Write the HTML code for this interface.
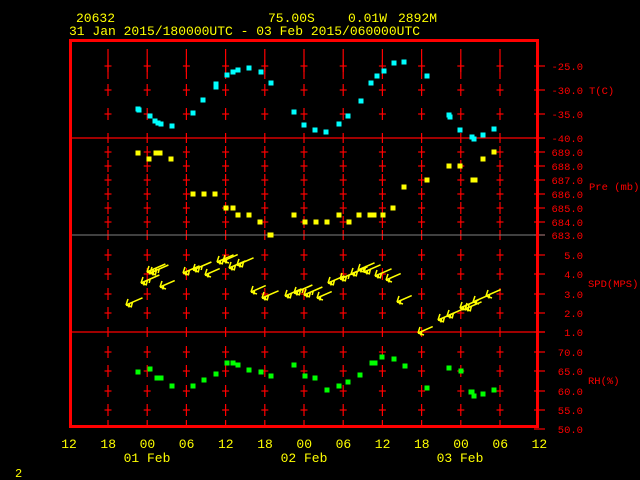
<!DOCTYPE html>
<html><head><meta charset="utf-8"><style>
html,body{margin:0;padding:0;background:#000;width:640px;height:480px;overflow:hidden}
svg{display:block}
text{font-family:"Liberation Mono",monospace}
</style></head><body>
<svg id="s" width="640" height="480" xmlns="http://www.w3.org/2000/svg">
<rect width="640" height="480" fill="#000"/>
<g fill="#ffff00" font-size="13">
<text x="76" y="22">20632</text>
<text x="268" y="22">75.00S</text>
<text x="348" y="22">0.01W</text>
<text x="398" y="22">2892M</text>
<text x="69" y="35">31 Jan 2015/180000UTC - 03 Feb 2015/060000UTC</text>
<text x="15" y="477" font-size="12">2</text>
</g>
<g id="grid" stroke="#ff0000" stroke-width="1.2"></g>
<line x1="70" y1="138" x2="545" y2="138" stroke="#f00" stroke-width="1.3"/>
<line x1="70" y1="235" x2="545" y2="235" stroke="#808080" stroke-width="1"/>
<line x1="70" y1="332" x2="545" y2="332" stroke="#f00" stroke-width="1.3"/>
<rect x="70.5" y="40.5" width="467" height="386" fill="none" stroke="#ff0000" stroke-width="3"/>
<g id="lab" fill="#ff0000" font-size="10.5" text-anchor="end"></g>
<g fill="#ff0000" font-size="10.5">
<text x="589" y="94">T(C)</text>
<text x="589" y="190">Pre (mb)</text>
<text x="588" y="287">SPD(MPS)</text>
<text x="588" y="384">RH(%)</text>
</g>
<g id="bot" fill="#ffff00" font-size="13" text-anchor="middle"></g>
<g id="pts"></g>
<g id="arr" stroke="#ffff00" stroke-width="1.5" fill="none"></g>
</svg>
<script>
var NS="http://www.w3.org/2000/svg";
function el(p,t,a,txt){var e=document.createElementNS(NS,t);for(var k in a)e.setAttribute(k,a[k]);if(txt)e.textContent=txt;document.getElementById(p).appendChild(e);return e;}
var cols=[];for(var i=0;i<11;i++)cols.push(108+i*39.2);
var rows=[66,90,114,152,166,180,194,208,222,255,274,294,313,352,371,391,410];
cols.forEach(function(x){
 rows.forEach(function(y){
  el("grid","line",{x1:x,y1:y-6,x2:x,y2:y+6});
  el("grid","line",{x1:x-3.5,y1:y,x2:x+3.5,y2:y});
 });
 el("grid","line",{x1:x,y1:49,x2:x,y2:79});
 [138,235,332].forEach(function(y){el("grid","line",{x1:x,y1:y-5,x2:x,y2:y+5});});
 el("grid","line",{x1:x,y1:420,x2:x,y2:425});
});
var labs=[[66,"-25.0"],[90,"-30.0"],[114,"-35.0"],[138,"-40.0"],[152,"689.0"],[166,"688.0"],[180,"687.0"],[194,"686.0"],[208,"685.0"],[222,"684.0"],[235,"683.0"],[255,"5.0"],[274,"4.0"],[294,"3.0"],[313,"2.0"],[332,"1.0"],[352,"70.0"],[371,"65.0"],[391,"60.0"],[410,"55.0"],[429,"50.0"]];
labs.forEach(function(l){el("lab","text",{x:583,y:l[0]+4},l[1]);el("grid","line",{x1:534,y1:l[0],x2:545,y2:l[0]});});
var bl=["12","18","00","06","12","18","00","06","12","18","00","06","12"];
bl.forEach(function(t,i){el("bot","text",{x:69+i*39.2,y:448},t);});
[[147,"01 Feb"],[304,"02 Feb"],[460,"03 Feb"]].forEach(function(d){el("bot","text",{x:d[0],y:462},d[1]);});
function pts(c,a,w){a.forEach(function(p){el("pts","rect",{x:p[0]-2.5,y:p[1]-2.5,width:p[2]||5,height:5,fill:c});});}
pts("#00ffff",[[138,109],[139,110],[150,116],[155,121],[158,123],[161,124],[172,126],[193,113],[203,100],[216,84],[216,87],[227,75],[233,72],[238,70],[249,68],[261,72],[271,83],[294,112],[304,125],[315,130],[326,132],[339,124],[348,116],[361,101],[371,83],[377,76],[384,71],[394,63],[404,62],[427,76],[449,115],[450,117],[460,130],[472,137],[474,139],[483,135],[494,129]]);
pts("#ffff00",[[138,153],[149,159],[156,153,9],[171,159],[193,194],[204,194],[215,194],[226,208],[233,208],[238,215],[249,215],[260,222],[270,235,6],[294,215],[305,222],[316,222],[327,222],[339,215],[349,222],[359,215],[370,215,9],[383,215],[393,208],[404,187],[427,180],[449,166],[460,166],[473,180,7],[483,159],[494,152]]);
pts("#00ff00",[[138,372],[150,369],[157,378,9],[172,386],[193,386],[204,380],[216,374],[227,363],[233,363],[238,365],[249,370],[261,372],[271,376],[294,365],[305,376],[315,378],[327,390],[339,386],[348,382],[360,375],[372,363,8],[382,357],[394,359],[405,366],[427,388],[449,368],[461,371],[471,392,6],[474,396],[483,394],[494,390]]);
var ar=[[126,305,2],[141,283,3],[147,272,3],[150,273,3],[160,287,1],[183,273,2],[193,270,3],[205,275,1],[217,262,2],[223,261,1],[229,268,2],[237,265,2],[251,292,1],[262,298,2],[285,296,2],[294,293,3],[304,295,3],[317,298,1],[328,283,2],[340,279,3],[351,274,2],[358,270,2],[364,272,2],[375,276,2],[386,280,1],[397,302,1],[418,333,1],[438,320,2],[447,316,2],[460,308,3],[465,309,2],[473,302,1],[486,296,1]];
ar.forEach(function(a){var x=a[0],y=a[1],n=a[2],L=14+n*2;var dx=0.92,dy=-0.4;
 var d="M"+x+" "+y+"L"+(x+dx*L)+" "+(y+dy*L)+"M"+x+" "+y+"l2 -6M"+x+" "+y+"l6 2";
 for(var k=0;k<n;k++){var px=x+dx*(4+k*3),py=y+dy*(4+k*3);d+="M"+px+" "+py+"l-1 4";}
 el("arr","path",{d:d});});
</script>
</body></html>
